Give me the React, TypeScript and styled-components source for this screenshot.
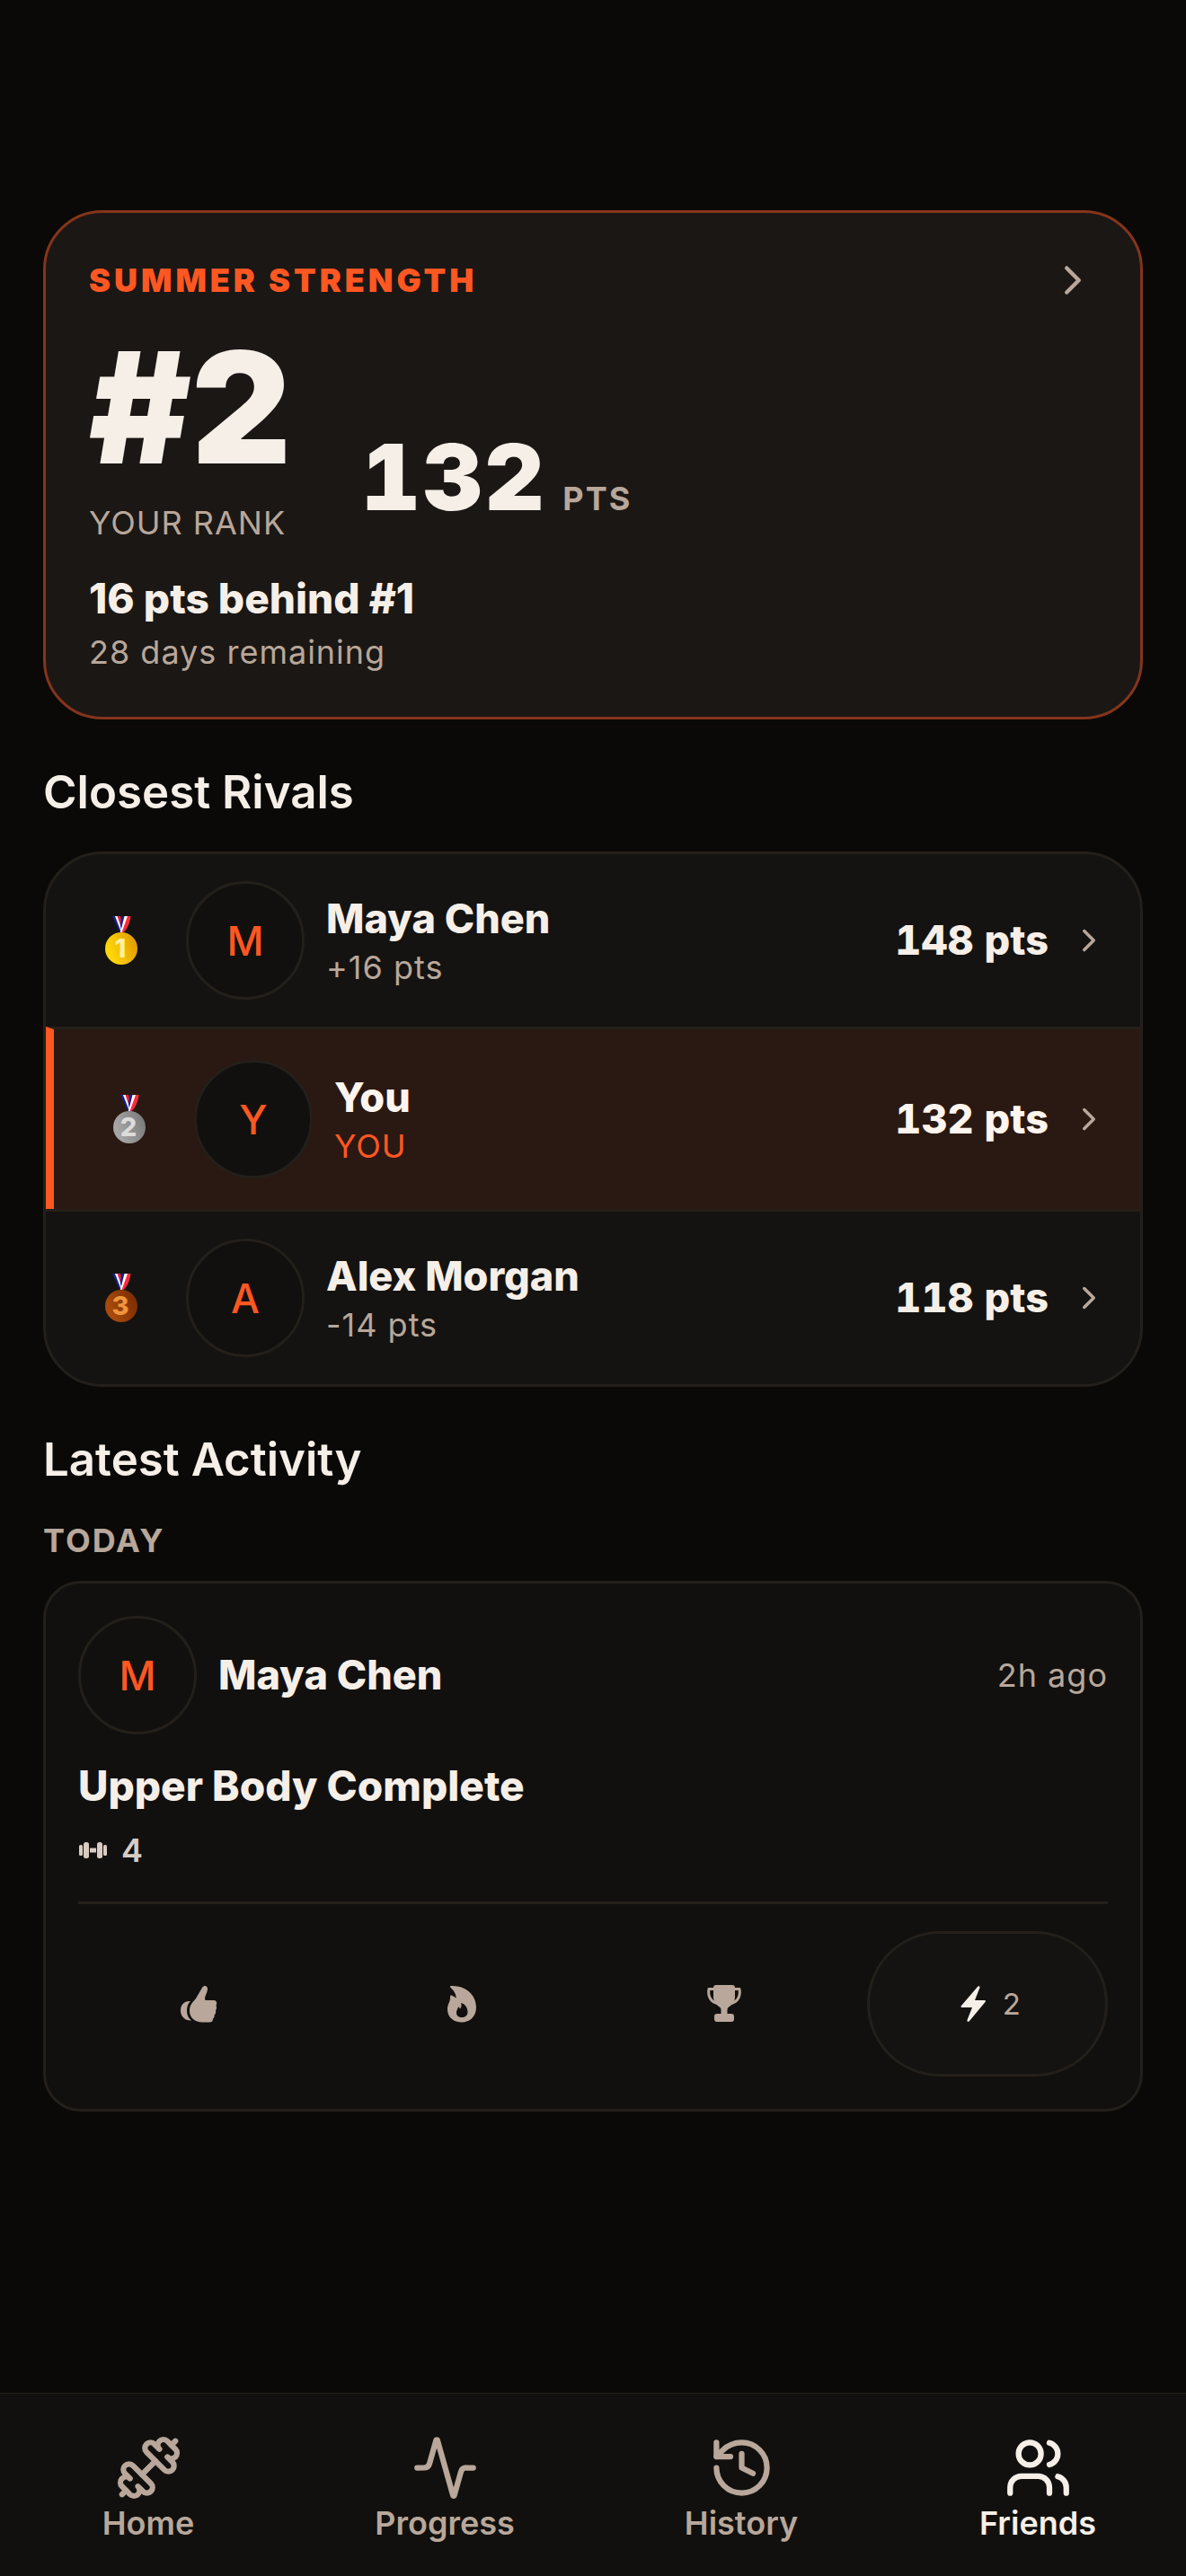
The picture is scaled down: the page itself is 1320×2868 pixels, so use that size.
import React from "react";
import styled, { createGlobalStyle, css } from "styled-components";
import { ChevronRight, Dumbbell, Activity, History, Users } from "lucide-react";

const c = {
  bg: "#0a0907",
  surface: "#11100e",
  raised: "#141311",
  hero: "#1b1714",
  line: "#241f1a",
  accent: "#ff5722",
  accentLine: "#85341c",
  you: "#2a1912",
  text: "#f6efe8",
  youText: "#fff5ee",
  muted: "#b8a79a",
  soft: "#d9ccc2",
};

const GlobalStyle = createGlobalStyle`
  *, *::before, *::after { box-sizing: border-box; }
  html, body, #root { height: 100%; }
  body {
    margin: 0;
    background: ${c.bg};
    color: ${c.text};
    font-family: Inter, "Liberation Sans", sans-serif;
    font-size: 45px;
    -webkit-font-smoothing: antialiased;
  }
  h1, h2, h3, p, ul { margin: 0; padding: 0; list-style: none; font-weight: inherit; font-size: inherit; }
  button, a { font: inherit; color: inherit; text-decoration: none; background: none; border: 0; padding: 0; cursor: pointer; text-align: left; }
  svg { display: block; flex: none; }
`;

const Screen = styled.div`
  min-height: 100%;
  display: flex;
  flex-direction: column;
`;

const Content = styled.main`
  flex: 1;
  display: flex;
  flex-direction: column;
  padding: 234px 48px 48px;
`;

const Caption = styled.span<{ $color?: string }>`
  font-size: 36px;
  line-height: 48px;
  letter-spacing: 1px;
  color: ${(p) => p.$color || c.muted};
`;

const Strong = styled.span<{ $color?: string }>`
  font-size: 45px;
  line-height: 60px;
  font-weight: 800;
  color: ${(p) => p.$color || c.text};
`;

const Lead = styled(Strong)`
  font-size: 46px;
`;

/* ---- league summary ---- */

const Hero = styled.button`
  display: flex;
  flex-direction: column;
  align-items: stretch;
  padding: 48px;
  border: 3px solid ${c.accentLine};
  border-radius: 66px;
  background: ${c.hero};
`;

const HeroTop = styled.span`
  display: flex;
  align-items: center;
  justify-content: space-between;
  height: 54px;
`;

const League = styled.span`
  font-size: 36px;
  font-weight: 900;
  letter-spacing: 4px;
  color: ${c.accent};
`;

const Scores = styled.span`
  display: flex;
  align-items: flex-end;
  gap: 78px;
  padding-top: 30px;
`;

const RankBlock = styled.span`
  display: flex;
  flex-direction: column;
  gap: 21px;
`;

const Rank = styled.span`
  font-size: 172px;
  line-height: 168px;
  font-weight: 900;
`;

const Points = styled.span`
  display: flex;
  align-items: baseline;
  gap: 18px;
  line-height: 102px;
`;

const PointsValue = styled.span`
  font-size: 102px;
  font-weight: 900;
  letter-spacing: 3px;
  font-variant-numeric: tabular-nums;
`;

const PointsUnit = styled.span`
  font-size: 36px;
  font-weight: 700;
  letter-spacing: 2px;
  color: ${c.muted};
`;

const Standing = styled.span`
  display: flex;
  flex-direction: column;
  gap: 6px;
  padding-top: 30px;
`;

/* ---- rivals ---- */

const Heading = styled.h2`
  font-size: 51px;
  line-height: 66px;
  font-weight: 600;
  padding: 48px 0 33px;
`;

const RivalList = styled.ul`
  border: 3px solid ${c.line};
  border-radius: 66px;
  overflow: hidden;
  background: ${c.raised};

  li + li > button {
    border-top: 3px solid ${c.line};
  }
`;

const RivalRow = styled.button<{ $you: boolean }>`
  width: 100%;
  display: flex;
  align-items: center;
  gap: 24px;
  padding: 30px 36px;
  ${(p) =>
    p.$you &&
    css`
      padding: 34px 36px;
      background: ${c.you};
      border-left: 9px solid ${c.accent};
    `}
`;

const MedalSlot = styled.span`
  width: 96px;
  display: flex;
  justify-content: center;
`;

const Avatar = styled.span`
  width: 132px;
  height: 132px;
  flex: none;
  display: flex;
  align-items: center;
  justify-content: center;
  border: 3px solid ${c.line};
  border-radius: 50%;
  background: ${c.surface};
  color: ${c.accent};
  font-weight: 500;
  font-size: 45px;
`;

const RivalText = styled.span`
  flex: 1;
  display: flex;
  flex-direction: column;
`;

const RivalPoints = styled(Strong)`
  font-variant-numeric: tabular-nums;
`;

/* ---- activity ---- */

const Day = styled.h3`
  font-size: 36px;
  line-height: 48px;
  font-weight: 700;
  letter-spacing: 2px;
  color: ${c.muted};
  padding-bottom: 21px;
`;

const Card = styled.article`
  border: 3px solid ${c.line};
  border-radius: 42px;
  background: ${c.surface};
  padding: 36px;
`;

const CardHead = styled.header`
  display: flex;
  align-items: center;
  gap: 24px;
  padding-bottom: 27px;
`;

const Who = styled(Strong)`
  flex: 1;
`;

const Stat = styled.p`
  display: flex;
  align-items: center;
  gap: 15px;
  padding-top: 18px;
  font-size: 36px;
  line-height: 48px;
  font-weight: 600;
  color: ${c.soft};
`;

const Reactions = styled.div`
  display: grid;
  grid-template-columns: repeat(4, 1fr);
  gap: 24px;
  margin-top: 33px;
  padding-top: 30px;
  border-top: 3px solid ${c.line};
`;

const Reaction = styled.button<{ $on?: boolean }>`
  height: 162px;
  display: flex;
  align-items: center;
  justify-content: center;
  gap: 12px;
  border: 3px solid ${(p) => (p.$on ? c.line : "transparent")};
  border-radius: 81px;
  background: ${(p) => (p.$on ? c.raised : "transparent")};
  color: ${(p) => (p.$on ? c.text : c.muted)};
`;

const ReactionCount = styled.span`
  font-size: 33px;
  color: ${c.muted};
`;

/* ---- tab bar ---- */

const TabBar = styled.nav`
  display: grid;
  grid-template-columns: repeat(4, 1fr);
  height: 204px;
  border-top: 1px solid ${c.line};
  background: ${c.surface};
`;

const Tab = styled.a<{ $active?: boolean }>`
  display: flex;
  flex-direction: column;
  align-items: center;
  padding-top: 45px;
  font-size: 36px;
  line-height: 48px;
  font-weight: 600;
  color: ${(p) => (p.$active ? c.text : c.muted)};
`;

const medalTones = [
  ["#ffd60a", "#e09a00", "#fff0a0"],
  ["#a6a6a6", "#7b7b7b", "#dcdcdc"],
  ["#a84a0c", "#7a2c02", "#f0963c"],
];

function Medal({ place }: { place: number }) {
  const [light, dark, digit] = medalTones[place - 1];
  const id = `medal-${place}`;
  return (
    <svg width="38" height="56" viewBox="0 0 38 56" role="img" aria-label={`Place ${place}`}>
      <defs>
        <linearGradient id={id} x1="0" y1="0.7" x2="1" y2="0.3">
          <stop offset="0.15" stopColor={light} />
          <stop offset="1" stopColor={dark} />
        </linearGradient>
      </defs>
      <path d="M9 1h5l6 18h-3Z" fill="#14208c" />
      <path d="M12 1h3l5 15-1 3Z" fill="#fff" />
      <path d="M14.500 1h3.500l2.500 8-1.500 5Z" fill="#e8203a" />
      <path d="M19 1h5l-5 15-1-4Z" fill="#14208c" />
      <path d="M22.500 1h4l-6 18h-2.500Z" fill="#fff" />
      <path d="M26 1h3.500c-1 8-4 14-8 18h-2Z" fill="#ff2a3c" />
      <circle cx="19" cy="37" r="18" fill={`url(#${id})`} />
      <text x="18" y="47" textAnchor="middle" fontFamily="Inter" fontWeight="800" fontSize="29" fill={digit}>
        {place}
      </text>
    </svg>
  );
}

const DumbbellGlyph = () => (
  <svg width="33" height="20" viewBox="0 0 33 20" fill="currentColor" aria-hidden="true">
    <rect x="1" y="4" width="4" height="12" rx="1.500" />
    <rect x="6" y="1" width="6" height="18" rx="2.500" />
    <rect x="13" y="7.500" width="7" height="5" />
    <rect x="21" y="1" width="6" height="18" rx="2.500" />
    <rect x="28" y="4" width="4" height="12" rx="1.500" />
  </svg>
);

const ThumbGlyph = () => (
  <svg width="42" height="42" viewBox="0 0 42 42" fill="currentColor" aria-hidden="true">
    <path d="M12 18C9 21 8 24 8 29c0 4 1.500 7.500 5 10.500C6 40 1 35 1 28.500 1 22 5 17.500 12 18Z" />
    <path d="M25 3c2.500-3.500 6.500-2 6 2C30.500 9 28 12 28 15c0 2 1 2 2.500 2H38c3 0 4 3 2.500 6 1 2 .5 4-.5 5.500.5 2 0 4-1.500 5 .5 2-.5 3.500-1.500 4 0 3-1.500 4-4 4h-8c-8 0-14-5-14-12.500 0-7 3-9 7-14Z" />
  </svg>
);

const FlameGlyph = () => (
  <svg width="42" height="42" viewBox="0 0 42 42" fill="currentColor" aria-hidden="true">
    <path
      fillRule="evenodd"
      d="M8 1C24 0 37 10 37 25c0 10-7 16.500-16 16.500S5 36 5 27c0-6 3.500-8.500 3-13.500C8 11.500 9 11 10.500 12L15 14.500C14 9 12 6 9.500 4 8 3 8 1 8 1Zm12 19c1 3 .5 5-1 6.500-.5-1-1-1.500-1.500-2.500C16 27 15 28.500 15 31c0 3 2.500 5 6 5s6.500-2 6.500-6c0-5-3-9-7.500-10Z"
    />
  </svg>
);

const TrophyGlyph = () => (
  <svg width="42" height="42" viewBox="0 0 42 42" fill="currentColor" aria-hidden="true">
    <path d="M12 0h18c2 0 3 1 3 3v10c0 5-2 8-6 11-2 1-2.500 2-2.500 4v5h-7v-5c0-2-.5-3-2.500-4-4-3-6-6-6-11V3c0-2 1-3 3-3Z" />
    <path d="M10 4.500H4C2.500 12 6 19.500 14 20.500M32 4.500h6c1.500 7.500-2 15-10 16" fill="none" stroke="currentColor" strokeWidth="3" strokeLinejoin="round" />
    <rect x="10" y="32" width="22" height="9" rx="3" />
  </svg>
);

const BoltGlyph = () => (
  <svg width="42" height="42" viewBox="0 0 42 42" fill="currentColor" aria-hidden="true">
    <path d="M26 2c1-1.500 3-1 2.500 1L23 17h11c1 0 1.500 1 .5 2L17 40c-1 1.500-3 1-2.500-1L20 25H8.500C7.500 25 7 24 8 23Z" />
  </svg>
);

const rivals = [
  { place: 1, name: "Maya Chen", note: "+16 pts", points: 148 },
  { place: 2, name: "You", note: "YOU", points: 132, you: true },
  { place: 3, name: "Alex Morgan", note: "-14 pts", points: 118 },
];

const reactions = [
  { label: "Like", Glyph: ThumbGlyph },
  { label: "Fire", Glyph: FlameGlyph },
  { label: "Trophy", Glyph: TrophyGlyph },
  { label: "Energy", Glyph: BoltGlyph, count: 2 },
];

const tabs = [
  { label: "Home", Icon: Dumbbell },
  { label: "Progress", Icon: Activity },
  { label: "History", Icon: History },
  { label: "Friends", Icon: Users, active: true },
];

export default function App() {
  return (
    <Screen>
      <GlobalStyle />
      <Content>
        <Hero type="button">
          <HeroTop>
            <League>SUMMER STRENGTH</League>
            <ChevronRight size={54} strokeWidth={2} color={c.muted} />
          </HeroTop>
          <Scores>
            <RankBlock>
              <Rank>#2</Rank>
              <Caption>YOUR RANK</Caption>
            </RankBlock>
            <Points>
              <PointsValue>132</PointsValue>
              <PointsUnit>PTS</PointsUnit>
            </Points>
          </Scores>
          <Standing>
            <Lead>16 pts behind #1</Lead>
            <Caption>28 days remaining</Caption>
          </Standing>
        </Hero>

        <Heading>Closest Rivals</Heading>
        <RivalList>
          {rivals.map((r) => (
            <li key={r.name}>
              <RivalRow type="button" $you={!!r.you}>
                <MedalSlot>
                  <Medal place={r.place} />
                </MedalSlot>
                <Avatar>{r.name[0]}</Avatar>
                <RivalText>
                  <Strong $color={r.you && c.youText}>{r.name}</Strong>
                  <Caption $color={r.you && c.accent}>{r.note}</Caption>
                </RivalText>
                <RivalPoints $color={r.you && c.youText}>{r.points} pts</RivalPoints>
                <ChevronRight size={42} strokeWidth={2} color={c.muted} />
              </RivalRow>
            </li>
          ))}
        </RivalList>

        <Heading>Latest Activity</Heading>
        <Day>TODAY</Day>
        <Card>
          <CardHead>
            <Avatar>M</Avatar>
            <Who>Maya Chen</Who>
            <Caption>2h ago</Caption>
          </CardHead>
          <Lead>Upper Body Complete</Lead>
          <Stat>
            <DumbbellGlyph />4
          </Stat>
          <Reactions>
            {reactions.map(({ label, Glyph, count }) => (
              <Reaction key={label} type="button" aria-label={label} $on={!!count}>
                <Glyph />
                {count && <ReactionCount>{count}</ReactionCount>}
              </Reaction>
            ))}
          </Reactions>
        </Card>
      </Content>

      <TabBar>
        {tabs.map(({ label, Icon, active }) => (
          <Tab key={label} href="#" $active={active}>
            <Icon size={75} strokeWidth={2} />
            {label}
          </Tab>
        ))}
      </TabBar>
    </Screen>
  );
}
